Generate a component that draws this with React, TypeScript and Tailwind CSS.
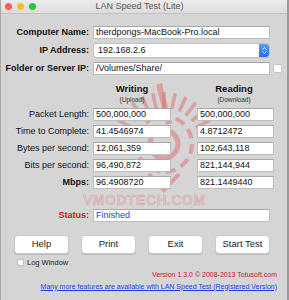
import React from "react";

const font = { fontFamily: '"Liberation Sans", Arial, Helvetica, sans-serif' };

function Field({ value, className = "" }: { value: string; className?: string }) {
  return (
    <div
      className={
        "h-[13px] bg-white border border-[#bdbdbd] border-t-[#a8a8a8] flex items-center pl-[2px] text-[9px] leading-none text-[#111] " +
        className
      }
    >
      {value}
    </div>
  );
}

function Label({ children, bold = false, red = false }: { children: React.ReactNode; bold?: boolean; red?: boolean }) {
  return (
    <div
      className={
        "text-right text-[9px] leading-none " +
        (bold ? "font-bold text-[9.5px] " : "") +
        (red ? "text-[#d0141c]" : "text-[#111]")
      }
    >
      {children}
    </div>
  );
}

function Btn({ children }: { children: React.ReactNode }) {
  return (
    <div className="w-[55px] h-[19px] bg-white rounded-[4px] border border-[#c9c9c9] shadow-[0_1px_0_rgba(0,0,0,0.12)] flex items-center justify-center text-[9.5px] text-[#222]">
      {children}
    </div>
  );
}

function Watermark() {
  const rays = Array.from({ length: 13 }, (_, i) => i);
  return (
    <svg
      className="absolute left-[108px] top-[82px] z-0 pointer-events-none"
      width="110"
      height="115"
      viewBox="0 0 110 115"
    >
      <g stroke="#e0605f" strokeOpacity="0.45" fill="none" strokeWidth="5">
        <circle cx="55" cy="62" r="14" />
        <circle cx="55" cy="62" r="28" strokeWidth="4" strokeDasharray="10 6" />
        {rays.map((i) => {
          const a = (-165 + i * 12.5) * (Math.PI / 180);
          const x1 = 55 + Math.cos(a) * 36;
          const y1 = 62 + Math.sin(a) * 36;
          const x2 = 55 + Math.cos(a) * 52;
          const y2 = 62 + Math.sin(a) * 52;
          return <line key={i} x1={x1} y1={y1} x2={x2} y2={y2} strokeWidth="3.5" />;
        })}
        <path d="M50 2 L60 42" strokeWidth="6" />
        <path d="M40 92 L55 108 L70 92" strokeWidth="4" />
      </g>
    </svg>
  );
}

export default function App() {
  return (
    <div
      style={font}
      className="w-[289px] h-[300px] relative overflow-hidden bg-[#d5d5d5] flex flex-col border-l border-l-[#a8a8a8] border-r-2 border-r-[#9a9a9a]"
    >
      {/* title bar */}
      <div className="h-[14px] shrink-0 bg-gradient-to-b from-[#ececec] to-[#dcdcdc] border-b border-[#c2c2c2] flex items-center relative">
        <div className="flex gap-[5px] pl-[4px]">
          <div className="w-[7px] h-[7px] rounded-full bg-[#fc5f57]" />
          <div className="w-[7px] h-[7px] rounded-full bg-[#fdbc2e]" />
          <div className="w-[7px] h-[7px] rounded-full bg-[#28c840]" />
        </div>
        <div className="flex-1 text-center text-[9px] text-[#555] pr-[44px] leading-none">
          LAN Speed Test (Lite)
        </div>
      </div>

      <Watermark />

      <div className="relative z-10 flex flex-col">
        {/* top fields */}
        <div className="mt-[12px] grid grid-cols-[88px_177px] gap-x-[4px] gap-y-[5px] items-center">
          <Label bold>Computer Name:</Label>
          <Field value="therdpongs-MacBook-Pro.local" />
          <Label bold>IP Address:</Label>
          <div className="h-[13px] ml-[1px] w-[175px] bg-white rounded-[3px] shadow-[0_0_0_1px_#c4c4c4,0_1px_1px_rgba(0,0,0,0.15)] flex items-center text-[9px] text-[#111] pl-[4px] relative">
            192.168.2.6
            <div className="absolute right-0 top-0 w-[10px] h-[13px] rounded-r-[3px] bg-gradient-to-b from-[#5aa0f7] to-[#1f6fe5] flex flex-col items-center justify-center gap-[1px]">
              <svg width="5" height="3" viewBox="0 0 5 3"><path d="M0.5 2.5 L2.5 0.5 L4.5 2.5" stroke="white" strokeWidth="0.9" fill="none" /></svg>
              <svg width="5" height="3" viewBox="0 0 5 3"><path d="M0.5 0.5 L2.5 2.5 L4.5 0.5" stroke="white" strokeWidth="0.9" fill="none" /></svg>
            </div>
          </div>
          <Label bold>Folder or Server IP:</Label>
          <div className="flex items-center gap-[3px]">
            <Field value="/Volumes/Share/" className="w-[177px] shrink-0" />
            <div className="w-[9px] h-[9px] shrink-0 bg-white rounded-[2px] border border-[#c4c4c4]" />
          </div>
        </div>

        {/* headers */}
        <div className="mt-[9px] grid grid-cols-[88px_78px_22px_76px] gap-x-[4px] items-start">
          <div />
          <div className="flex flex-col items-center">
            <div className="text-[9.5px] font-bold leading-none text-[#111]">Writing</div>
            <div className="text-[6.5px] leading-none mt-[3px] text-[#333]">(Upload)</div>
          </div>
          <div />
          <div className="flex flex-col items-center -ml-[10px]">
            <div className="text-[9.5px] font-bold leading-none text-[#111]">Reading</div>
            <div className="text-[6.5px] leading-none mt-[3px] text-[#333]">(Download)</div>
          </div>
        </div>

        {/* data rows */}
        <div className="mt-[5px] grid grid-cols-[88px_78px_18px_77px] gap-x-[4px] gap-y-[4px] items-center">
          <Label>Packet Length:</Label>
          <Field value="500,000,000" />
          <div />
          <Field value="500,000,000" />
          <Label>Time to Complete:</Label>
          <Field value="41.4546974" />
          <div />
          <Field value="4.8712472" />
          <Label>Bytes per second:</Label>
          <Field value="12,061,359" />
          <div />
          <Field value="102,643,118" />
          <Label>Bits per second:</Label>
          <Field value="96,490,872" />
          <div />
          <Field value="821,144,944" />
          <Label bold>Mbps:</Label>
          <Field value="96.4908720" />
          <div />
          <Field value="821.1449440" />
        </div>

        {/* watermark text */}
        <div className="mt-[4px] ml-[82px] h-[14px] text-[14px] font-bold leading-none text-[rgba(230,130,130,0.16)] [-webkit-text-stroke:0.6px_rgba(215,80,80,0.32)] tracking-[0.5px]">
          VMODTECH.COM
        </div>

        {/* status */}
        <div className="mt-[2px] grid grid-cols-[88px_177px] gap-x-[4px] items-center">
          <Label bold red>Status:</Label>
          <div className="h-[13px] bg-white border border-[#bdbdbd] border-t-[#a8a8a8] flex items-center pl-[2px] text-[9px] leading-none text-[#2a3cf0]">
            Finished
          </div>
        </div>

        {/* buttons */}
        <div className="mt-[13px] ml-[13px] flex gap-[12px]">
          <Btn>Help</Btn>
          <Btn>Print</Btn>
          <Btn>Exit</Btn>
          <Btn>Start Test</Btn>
        </div>

        {/* log window */}
        <div className="mt-[5px] ml-[16px] flex items-center gap-[3px]">
          <div className="w-[7px] h-[7px] bg-white border border-[#bdbdbd] rounded-[1px]" />
          <div className="text-[7.5px] leading-none text-[#222]">Log Window</div>
        </div>

        {/* version */}
        <div className="mt-[4px] pr-[10px] text-right text-[7px] leading-none text-[#d0141c]">
          Version 1.3.0 © 2008-2013 Totusoft.com
        </div>

        {/* link */}
        <div className="mt-[5px] pr-[10px] text-right text-[7px] leading-none text-[#2a3cf0] underline">
          Many more features are available with LAN Speed Test (Registered Version)
        </div>
      </div>
    </div>
  );
}
